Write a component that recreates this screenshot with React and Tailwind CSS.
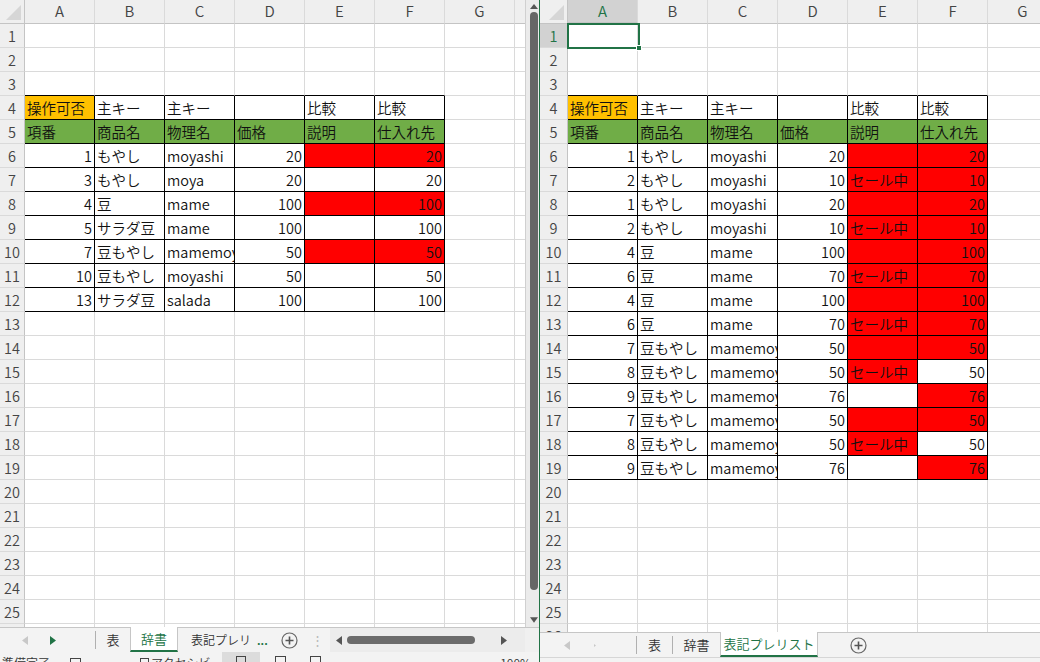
import React from 'react';

const COLS = ['A', 'B', 'C', 'D', 'E', 'F', 'G', 'H'];
const ORANGE = 'bg-[#ffc000]';
const GREEN = 'bg-[#70ad47]';
const RED = 'bg-[#ff0000]';

function mk(n, name, phys, price, eRed, eText, fRed, fVal) {
  return [
    { v: n, r: true },
    { v: name },
    { v: phys },
    { v: price, r: true },
    { v: eText, bg: eRed ? RED : '' },
    { v: fVal, r: true, bg: fRed ? RED : '' },
  ];
}

const HEAD4 = [{ v: '操作可否', bg: ORANGE }, { v: '主キー' }, { v: '主キー' }, { v: '' }, { v: '比較' }, { v: '比較' }];
const HEAD5 = ['項番', '商品名', '物理名', '価格', '説明', '仕入れ先'].map((v) => ({ v, bg: GREEN }));

const LEFT = {
  4: HEAD4,
  5: HEAD5,
  6: mk(1, 'もやし', 'moyashi', 20, 1, '', 1, 20),
  7: mk(3, 'もやし', 'moya', 20, 0, '', 0, 20),
  8: mk(4, '豆', 'mame', 100, 1, '', 1, 100),
  9: mk(5, 'サラダ豆', 'mame', 100, 0, '', 0, 100),
  10: mk(7, '豆もやし', 'mamemoyashi', 50, 1, '', 1, 50),
  11: mk(10, '豆もやし', 'moyashi', 50, 0, '', 0, 50),
  12: mk(13, 'サラダ豆', 'salada', 100, 0, '', 0, 100),
};

const RIGHT = {
  4: HEAD4,
  5: HEAD5,
  6: mk(1, 'もやし', 'moyashi', 20, 1, '', 1, 20),
  7: mk(2, 'もやし', 'moyashi', 10, 1, 'セール中', 1, 10),
  8: mk(1, 'もやし', 'moyashi', 20, 1, '', 1, 20),
  9: mk(2, 'もやし', 'moyashi', 10, 1, 'セール中', 1, 10),
  10: mk(4, '豆', 'mame', 100, 1, '', 1, 100),
  11: mk(6, '豆', 'mame', 70, 1, 'セール中', 1, 70),
  12: mk(4, '豆', 'mame', 100, 1, '', 1, 100),
  13: mk(6, '豆', 'mame', 70, 1, 'セール中', 1, 70),
  14: mk(7, '豆もやし', 'mamemoyashi', 50, 1, '', 1, 50),
  15: mk(8, '豆もやし', 'mamemoyashi', 50, 1, 'セール中', 0, 50),
  16: mk(9, '豆もやし', 'mamemoyashi', 76, 0, '', 1, 76),
  17: mk(7, '豆もやし', 'mamemoyashi', 50, 1, '', 1, 50),
  18: mk(8, '豆もやし', 'mamemoyashi', 50, 1, 'セール中', 0, 50),
  19: mk(9, '豆もやし', 'mamemoyashi', 76, 0, '', 1, 76),
};

function Corner({ w }) {
  return (
    <div className={`${w} h-6 shrink-0 bg-[#efefef] border-r border-b border-[#c4c4c4] flex items-end justify-end p-[3px]`}>
      <svg width="15" height="15" viewBox="0 0 15 15">
        <polygon points="15,0 15,15 0,15" fill="#d6d6d6" />
      </svg>
    </div>
  );
}

function Sheet({ data, lastRow, rowHeadW, height, selected }) {
  const rows = Array.from({ length: 26 }, (_, i) => i + 1);
  return (
    <div className={`relative overflow-hidden ${height}`}>
      <div className="flex h-6">
        <Corner w={rowHeadW} />
        {COLS.map((c, ci) => (
          <div
            key={c}
            className={`w-[70px] h-6 shrink-0 border-r border-b border-r-[#dadada] border-b-[#c4c4c4] flex items-center justify-center text-[15px] ${
              selected && ci === 0 ? 'bg-[#d2d2d2] text-[#217346] border-b-[#217346] border-b-2' : 'bg-[#efefef] text-[#444]'
            }`}
          >
            {c}
          </div>
        ))}
      </div>
      {rows.map((r) => (
        <div key={r} className="flex h-6">
          <div
            className={`${rowHeadW} h-6 shrink-0 border-r border-b border-r-[#c4c4c4] border-b-[#dadada] flex items-center justify-center text-[14.5px] ${
              selected && r === 1 ? 'bg-[#d2d2d2] text-[#217346]' : 'bg-[#efefef] text-[#444]'
            }`}
          >
            {r}
          </div>
          {COLS.map((c, ci) => {
            const cell = data[r] && data[r][ci];
            const inTable = ci < 6 && r >= 4 && r <= lastRow;
            let border = 'border-[#dadada]';
            if (inTable) border = 'border-black';
            else if (r === 3 && ci < 6) border = 'border-r-[#dadada] border-b-black';
            return (
              <div
                key={c}
                className={`w-[70px] h-6 shrink-0 border-r border-b ${border} px-[2px] overflow-hidden whitespace-nowrap text-[14.5px] leading-[23px] text-[#111] ${
                  cell && cell.bg ? cell.bg : 'bg-white'
                } ${cell && cell.r ? 'text-right' : 'text-left'}`}
              >
                {cell ? cell.v : ''}
              </div>
            );
          })}
        </div>
      ))}
      {selected && (
        <div className="absolute left-[27px] top-[23px] w-[73px] h-[26px] border-2 border-[#217346]">
          <div className="absolute -right-[4px] -bottom-[4px] w-[6px] h-[6px] bg-[#217346] border border-white" />
        </div>
      )}
    </div>
  );
}

function TriLeft({ color }) {
  return (
    <svg width="6" height="9" viewBox="0 0 6 9">
      <polygon points="6,0 6,9 0,4.5" fill={color} />
    </svg>
  );
}

function TriRight({ color }) {
  return (
    <svg width="6" height="9" viewBox="0 0 6 9">
      <polygon points="0,0 0,9 6,4.5" fill={color} />
    </svg>
  );
}

function PlusCircle() {
  return (
    <svg width="17" height="17" viewBox="0 0 17 17">
      <circle cx="8.5" cy="8.5" r="7.5" fill="none" stroke="#666" strokeWidth="1.2" />
      <path d="M8.5 4.5v8M4.5 8.5h8" stroke="#555" strokeWidth="1.6" />
    </svg>
  );
}

function LeftTabs() {
  return (
    <div className="h-[25px] flex items-stretch bg-[#f3f3f3] border-t border-[#c6c6c6] text-[13px] text-[#333]">
      <div className="w-[50px] flex items-center justify-center">
        <TriLeft color="#c8c8c8" />
      </div>
      <div className="w-[6px] flex items-center justify-center">
        <TriRight color="#217346" />
      </div>
      <div className="w-[39px]" />
      <div className="w-px my-[3px] bg-[#b0b0b0]" />
      <div className="w-[34px] flex items-center justify-center">表</div>
      <div className="w-[48px] -mt-px bg-white border-x border-[#c6c6c6] border-b-2 border-b-[#217346] flex items-center justify-center text-[#217346]">
        辞書
      </div>
      <div className="w-[96px] flex items-center pl-[13px]">
        <span className="w-[60px] shrink-0 whitespace-nowrap text-[12px]">表記プレリ</span>
        <span className="ml-[6px] text-[#217346] font-bold text-[11px]">...</span>
      </div>
      <div className="w-[30px] flex items-center justify-center">
        <PlusCircle />
      </div>
      <div className="w-[26px] flex items-center justify-center text-[#b8b8b8]">⋮</div>
      <div className="w-[195px] bg-[#ececec] flex items-center pl-[6px]">
        <TriLeft color="#555" />
        <div className="ml-[5px] w-[128px] h-[8px] rounded-full bg-[#6b6b6b]" />
        <div className="flex-1" />
        <TriRight color="#555" />
        <div className="w-[18px]" />
      </div>
      <div className="flex-1 bg-[#f0f0f0]" />
    </div>
  );
}

function RightTabs() {
  return (
    <div className="h-[25px] flex items-stretch bg-[#f3f3f3] border-t border-[#c6c6c6] text-[13px] text-[#333]">
      <div className="w-[54px] flex items-center justify-center">
        <TriLeft color="#c8c8c8" />
      </div>
      <div className="w-[2px] flex items-center justify-center">
        <TriRight color="#c8c8c8" />
      </div>
      <div className="w-[40px]" />
      <div className="w-px my-[3px] bg-[#b0b0b0]" />
      <div className="w-[35px] flex items-center justify-center">表</div>
      <div className="w-px my-[3px] bg-[#b0b0b0]" />
      <div className="w-[47px] flex items-center justify-center">辞書</div>
      <div className="w-[98px] -mt-px bg-white border-x border-[#c6c6c6] border-b-2 border-b-[#217346] flex items-center justify-center text-[#217346]">
        表記プレリスト
      </div>
      <div className="w-[80px] flex items-center justify-center">
        <PlusCircle />
      </div>
      <div className="flex-1" />
    </div>
  );
}

function VScroll() {
  return (
    <div className="w-[14px] h-[627px] bg-[#ebebeb] border-l border-[#d0d0d0] flex flex-col items-end pr-px">
      <div className="h-[12px] w-[8px] flex items-center justify-center">
        <svg width="8" height="5" viewBox="0 0 8 5">
          <polygon points="0,5 8,5 4,0" fill="#555" />
        </svg>
      </div>
      <div className="w-[8px] h-[578px] rounded-full bg-[#666]" />
      <div className="flex-1" />
      <div className="h-[14px] w-[8px] flex items-center justify-center">
        <svg width="9" height="6" viewBox="0 0 9 6">
          <polygon points="0,0 9,0 4.5,6" fill="#555" />
        </svg>
      </div>
    </div>
  );
}

function Status() {
  return (
    <div className="h-[10px] overflow-hidden bg-[#f3f3f3] flex items-start text-[12px] leading-[14px] text-[#333] pt-[4px]">
      <span className="w-[70px] pl-[2px]">準備完了</span>
      <span className="w-[70px]">
        <span className="inline-block w-[11px] h-[10px] border border-[#444]" />
      </span>
      <span className="w-[82px]">
        <span className="inline-block w-[9px] h-[10px] border border-[#444] mr-[2px]" />
        アクセシビリティ
      </span>
      <span className="w-[38px] h-[10px] -mt-[4px] pt-[4px] bg-[#dcdcdc] flex justify-center">
        <span className="inline-block w-[10px] h-[10px] border border-[#444]" />
      </span>
      <span className="w-[40px] flex justify-center">
        <span className="inline-block w-[11px] h-[10px] border border-[#444]" />
      </span>
      <span className="w-[30px] flex justify-center">
        <span className="inline-block w-[11px] h-[10px] border border-[#444]" />
      </span>
      <span className="w-[80px] text-right">−</span>
      <span className="flex-1" />
      <span className="pr-[8px]">100%</span>
    </div>
  );
}

export default function App() {
  return (
    <div className="w-[1040px] h-[662px] flex overflow-hidden bg-white font-['Noto_Sans_CJK_JP','Noto_Sans',sans-serif] font-[350]">
      <div className="w-[539px] shrink-0 flex flex-col">
        <div className="flex h-[627px]">
          <div className="w-[525px] overflow-hidden">
            <Sheet data={LEFT} lastRow={12} rowHeadW="w-[25px]" height="h-[627px]" />
          </div>
          <VScroll />
        </div>
        <LeftTabs />
        <Status />
      </div>
      <div className="w-px shrink-0 bg-[#217346]" />
      <div className="w-[500px] shrink-0 flex flex-col">
        <Sheet data={RIGHT} lastRow={19} rowHeadW="w-[28px]" height="h-[632px]" selected />
        <RightTabs />
        <div className="flex-1 bg-[#f3f3f3] border-t border-[#d6d6d6]" />
      </div>
    </div>
  );
}
